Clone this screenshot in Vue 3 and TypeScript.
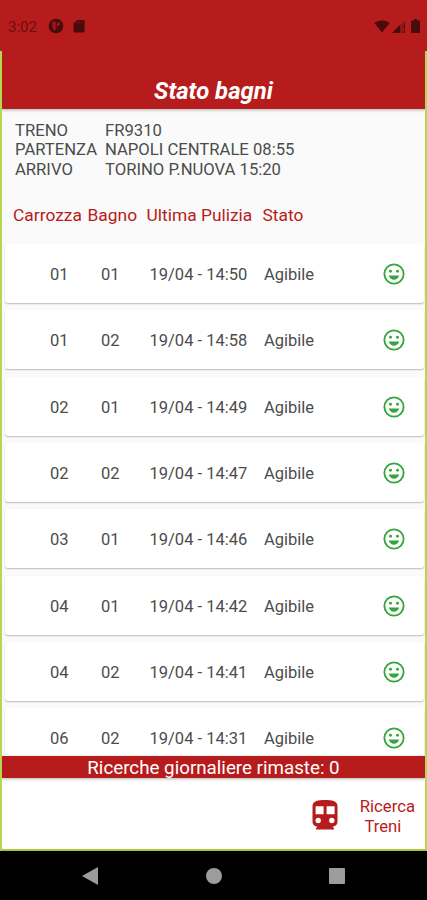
<script setup lang="ts">
interface Toilet {
  coach: string
  toilet: string
  cleaned: string
  status: string
}

interface TripLine {
  label: string
  value: string
}

const trip: TripLine[] = [
  { label: 'TRENO', value: 'FR9310' },
  { label: 'PARTENZA', value: 'NAPOLI CENTRALE 08:55' },
  { label: 'ARRIVO', value: 'TORINO P.NUOVA 15:20' },
]

const toilets: Toilet[] = [
  { coach: '01', toilet: '01', cleaned: '19/04 - 14:50', status: 'Agibile' },
  { coach: '01', toilet: '02', cleaned: '19/04 - 14:58', status: 'Agibile' },
  { coach: '02', toilet: '01', cleaned: '19/04 - 14:49', status: 'Agibile' },
  { coach: '02', toilet: '02', cleaned: '19/04 - 14:47', status: 'Agibile' },
  { coach: '03', toilet: '01', cleaned: '19/04 - 14:46', status: 'Agibile' },
  { coach: '04', toilet: '01', cleaned: '19/04 - 14:42', status: 'Agibile' },
  { coach: '04', toilet: '02', cleaned: '19/04 - 14:41', status: 'Agibile' },
  { coach: '06', toilet: '02', cleaned: '19/04 - 14:31', status: 'Agibile' },
]

const remaining = 0
</script>

<template>
  <div class="screen">
    <div class="status-bar">
      <span class="clock">3:02</span>
      <svg class="app-icon" viewBox="0 0 16 16">
        <circle cx="8" cy="8" r="7.3" />
        <path class="cutout" d="M4.4 3.6h3.2v8.6H6.200L4.400 9.600zM9 4.400h2.600v3.400H9z" />
      </svg>
      <svg class="sd-icon" viewBox="0 0 12 14">
        <path d="M4 1h6.6a1 1 0 0 1 1 1v10.4a1 1 0 0 1-1 1H1.5a1 1 0 0 1-1-1V4.6z" />
        <path class="pins" d="M4.3 2.6v1.8M6.6 2.6v1.8M8.9 2.6v1.8" />
      </svg>
      <span class="spacer"></span>
      <svg class="wifi" viewBox="0 0 16 13">
        <path d="M8 12.6L.3 3.1C4.5-.4 11.5-.4 15.7 3.1z" />
      </svg>
      <svg class="signal" viewBox="0 0 13 13">
        <path class="faint" d="M0 13L13 0v13z" />
        <path d="M0 13l8-8v8zM12 4.5h1V9h-1zM12 11h1v2h-1z" />
      </svg>
      <svg class="battery" viewBox="0 0 9 14">
        <path d="M3 0h3v1.5h2.3q.7 0 .7.7v11q0 .8-.7.8H.7Q0 14 0 13.2v-11q0-.7.7-.7H3z" />
      </svg>
    </div>

    <div class="app">
      <header class="title-bar"><h1>Stato bagni</h1></header>

      <main class="content">
        <dl class="trip">
          <div v-for="line in trip" :key="line.label" class="trip-line">
            <dt>{{ line.label }}</dt>
            <dd>{{ line.value }}</dd>
          </div>
        </dl>

        <div class="columns">
          <span>Carrozza</span>
          <span>Bagno</span>
          <span>Ultima Pulizia</span>
          <span>Stato</span>
        </div>

        <div class="list">
          <div v-for="(item, i) in toilets" :key="i" class="card">
            <span>{{ item.coach }}</span>
            <span>{{ item.toilet }}</span>
            <span>{{ item.cleaned }}</span>
            <span>{{ item.status }}</span>
            <svg class="smile" viewBox="0 0 24 24">
              <circle class="ring" cx="12" cy="12" r="10.5" />
              <circle cx="8.2" cy="9" r="1.6" />
              <circle cx="15.8" cy="9" r="1.6" />
              <path d="M6.3 13.5h11.4c-.8 2.8-3 4.7-5.7 4.7s-4.9-1.9-5.7-4.7z" />
            </svg>
          </div>
        </div>
      </main>

      <div class="quota">Ricerche giornaliere rimaste: {{ remaining }}</div>

      <footer class="actions">
        <svg class="train" viewBox="0 0 26 30">
          <path
            fill-rule="evenodd"
            d="M13 0C6 0 .5.9.5 6.3v15.4c0 2.9 2.2 4.8 5 4.8L4 28.3V29.5h18v-1.2l-1.5-1.8c2.8 0 5-1.9 5-4.8V6.3C25.5.9 20 0 13 0zM3.6 6.2h8v8h-8zM14.6 6.2h8v8h-8zM6.2 17.8a2.7 2.7 0 1 1 0 5.4 2.7 2.7 0 0 1 0-5.4zM19.8 17.8a2.7 2.7 0 1 1 0 5.4 2.7 2.7 0 0 1 0-5.4z"
          />
        </svg>
        <span class="search">
          <span>Ricerca</span>
          <span class="second">Treni</span>
        </span>
      </footer>
    </div>

    <nav class="nav-bar">
      <svg class="back" viewBox="0 0 16 18"><path d="M0 9L16 0v18z" /></svg>
      <svg class="home" viewBox="0 0 16 16"><circle cx="8" cy="8" r="8" /></svg>
      <svg class="recent" viewBox="0 0 16 16"><rect width="16" height="16" rx="1" /></svg>
    </nav>
  </div>
</template>

<style>
body {
  margin: 0;
  overflow: hidden;
}
</style>

<style scoped>
.screen {
  width: 427px;
  height: 900px;
  display: flex;
  flex-direction: column;
  overflow: hidden;
  background: #b71c1c;
  color: #4c4c4c;
  font-family: Roboto, 'Liberation Sans', sans-serif;
  font-size: 16.5px;
}
svg {
  display: block;
  flex: none;
}
.status-bar {
  box-sizing: border-box;
  height: 51px;
  flex: none;
  display: flex;
  align-items: center;
  padding: 1px 7px 0 8px;
  color: #671010;
  fill: #4a0b0d;
}
.clock {
  width: 40px;
  font-size: 15px;
  line-height: 18px;
  padding-top: 1px;
}
.app-icon {
  width: 16px;
  height: 16px;
  margin-right: 9px;
}
.cutout {
  fill: #a01a1a;
}
.sd-icon {
  width: 12px;
  height: 14px;
}
.pins {
  stroke: #8a1515;
  stroke-width: 0.8;
}
.spacer {
  flex: 1;
}
.wifi {
  width: 16px;
  height: 13px;
  margin-right: 2px;
}
.signal {
  width: 13px;
  height: 13px;
  margin-right: 6px;
}
.faint {
  fill: #8b1717;
}
.battery {
  width: 9px;
  height: 14px;
}
.app {
  box-sizing: border-box;
  height: 800px;
  flex: none;
  display: flex;
  flex-direction: column;
  overflow: hidden;
  border: 2px solid #b5d84c;
  border-top: 0;
  border-bottom-color: #a6c93c;
  background: #fff;
}
.title-bar {
  height: 58px;
  flex: none;
  display: flex;
  justify-content: center;
  align-items: flex-end;
  background: #b71c1c;
  box-shadow: 0 1px 3px rgba(0, 0, 0, 0.3);
  z-index: 1;
}
h1 {
  margin: 0 0 4px;
  color: #fff;
  font-size: 23.9px;
  line-height: 28px;
  font-weight: 700;
  font-style: italic;
}
.content {
  flex: 1;
  min-height: 0;
  overflow: hidden;
  background: #fafafa;
}
.trip {
  margin: 0;
  padding: 11.6px 0 0 13px;
  font-size: 16.65px;
}
.trip-line {
  display: grid;
  grid-template-columns: 90px 1fr;
  line-height: 19.7px;
}
dd {
  margin: 0;
}
.columns {
  display: grid;
  grid-template-columns: 74.5px 59px 116px 1fr;
  margin-top: 24.4px;
  padding-left: 11px;
  font-size: 17.4px;
  line-height: 22px;
  white-space: nowrap;
  color: #b71c1c;
}
.list {
  display: flex;
  flex-direction: column;
  gap: 7.3px;
  padding: 18px 1px 0 3px;
}
.card {
  height: 59px;
  flex: none;
  box-sizing: border-box;
  display: grid;
  grid-template-columns: 51px 48.5px 114.5px 1fr 22px;
  align-items: center;
  padding: 2px 19px 0 45px;
  border-radius: 3px;
  background: #fff;
  box-shadow: 0 1px 1.5px rgba(0, 0, 0, 0.25);
}
.smile {
  width: 22px;
  height: 22px;
  margin-top: -1px;
  fill: #35a53d;
}
.ring {
  fill: none;
  stroke: #35a53d;
  stroke-width: 2;
}
.quota {
  height: 22px;
  flex: none;
  background: #b71c1c;
  box-shadow: 0 1px 3px rgba(0, 0, 0, 0.3);
  color: #fff;
  font-size: 18.75px;
  line-height: 25px;
  text-align: center;
}
.actions {
  height: 71px;
  flex: none;
  display: flex;
  justify-content: flex-end;
  align-items: center;
  gap: 22px;
  box-sizing: border-box;
  padding: 3px 10px 0 0;
  color: #b71c1c;
}
.train {
  width: 26px;
  height: 30px;
  fill: #b71c1c;
}
.search {
  display: flex;
  flex-direction: column;
  align-items: center;
  font-size: 16.7px;
  line-height: 19.7px;
  padding-top: 4px;
}
.second {
  margin-right: 9px;
}
.nav-bar {
  flex: 1;
  display: flex;
  align-items: center;
  padding: 0 82px;
  justify-content: space-between;
  background: #000;
  fill: #9c9c9c;
}
.back {
  width: 16px;
  height: 18px;
}
.home,
.recent {
  width: 16px;
  height: 16px;
}
</style>
